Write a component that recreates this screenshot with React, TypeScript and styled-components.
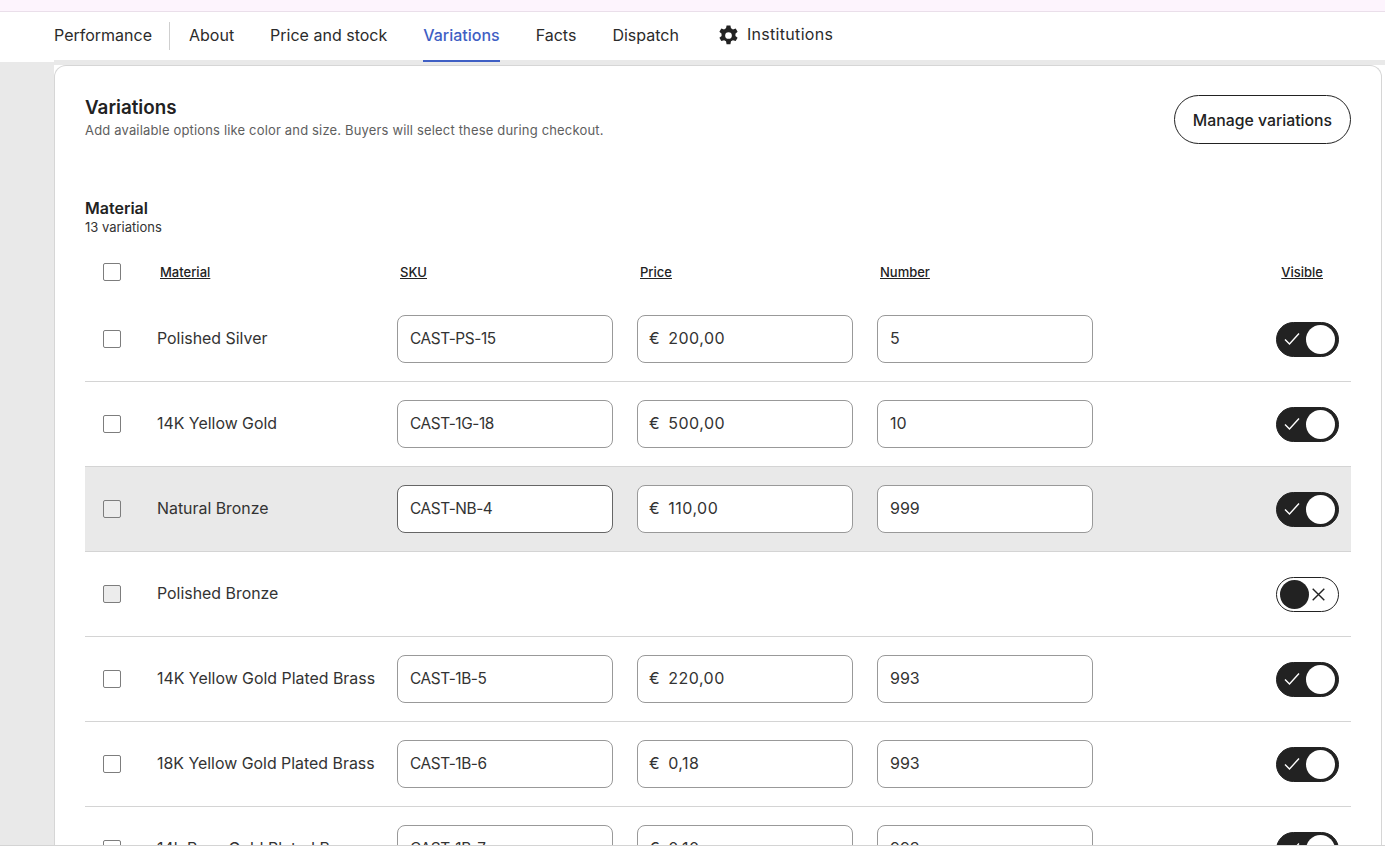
import React from "react";
import styled, { createGlobalStyle } from "styled-components";

const Global = createGlobalStyle`
  html, body { margin: 0; padding: 0; height: 100%; overflow: hidden; background: #fff; }
  * { box-sizing: border-box; }
  body { font-family: Inter, "Liberation Sans", sans-serif; color: #222; }
`;

const Viewport = styled.div`
  height: 846px;
  overflow: hidden;
  display: flex;
  flex-direction: column;
  border-bottom: 1px solid #d4d4d4;
  background: #fff;
`;
const TopStrip = styled.div`
  height: 12px;
  flex: none;
  background: #fdf4fd;
  border-bottom: 1px solid #eadfea;
`;
const Nav = styled.nav`
  height: 50px;
  flex: none;
  background: linear-gradient(#e9e9e9, #e9e9e9) 54px 48px / 100% 2px no-repeat, #fff;
  display: flex;
  padding-left: 54px;
`;
const Tab = styled.a<{ $active?: boolean; $flush?: boolean }>`
  display: flex;
  align-items: center;
  height: 50px;
  padding-bottom: 2px;
  font-size: 16px;
  color: ${(p) => (p.$active ? "#3f5fc4" : "#2b2b2b")};
  font-weight: ${(p) => (p.$active ? 500 : 400)};
  border-bottom: 2px solid ${(p) => (p.$active ? "#3f5fc4" : "transparent")};
  margin-right: ${(p) => (p.$flush ? 0 : 36)}px;
  white-space: nowrap;
`;
const SettingsTab = styled(Tab)`
  gap: 7px;
  padding-left: 2px;
  padding-bottom: 4px;
  letter-spacing: 0.02em;
  svg { margin-top: 3px; }
`;
const Divider = styled.span`
  width: 1px;
  height: 28px;
  margin: 10px 19px 0 17px;
  background: #cfcfcf;
`;
const Page = styled.main`
  flex: 1;
  min-height: 0;
  display: flex;
  border-top: 3px solid #e9e9e9;
`;
const Gutter = styled.div`
  width: 54px;
  flex: none;
  background: #e9e9e9;
`;
const Card = styled.section`
  flex: 1;
  margin-right: 3px;
  background: #fff;
  border: 1px solid #d6d6d6;
  border-bottom: none;
  border-radius: 12px 12px 0 0;
  padding: 29px 30px 0;
  height: 900px;
`;
const CardHead = styled.header`
  display: flex;
  justify-content: space-between;
  align-items: flex-start;
`;
const Intro = styled.div`
  padding-top: 1px;
`;
const Title = styled.h2`
  margin: 0;
  font-size: 18.8px;
  line-height: 24px;
  font-weight: 600;
`;
const Sub = styled.p`
  margin: 2px 0 0;
  font-size: 13px;
  letter-spacing: 0.165px;
  line-height: 16px;
  color: #5e5e5e;
`;
const Manage = styled.button`
  height: 49px;
  width: 177px;
  padding: 2px 0 0;
  border-radius: 25px;
  border: 1px solid #222;
  background: #fff;
  color: #222;
  font: 500 15.8px Inter, "Liberation Sans", sans-serif;
`;
const Section = styled.div`
  margin-top: 54px;
`;
const SectionTitle = styled.h3`
  margin: 0;
  font-size: 16px;
  line-height: 20px;
  font-weight: 600;
`;
const SectionSub = styled.p`
  margin: 1px 0 0;
  font-size: 13px;
  line-height: 17px;
  color: #333;
`;
const Columns = `
  display: grid;
  grid-template-columns: 72px 240px 240px 240px 240px 1fr;
  align-items: center;
`;
const HeadRow = styled.div`
  ${Columns}
  height: 61px;
  padding-top: 11px;
`;
const HeadLabel = styled.span`
  font-size: 13px;
  font-weight: 500;
  text-decoration: underline;
  padding-left: 3px;
`;
const VisibleLabel = styled(HeadLabel)`
  justify-self: end;
  margin-right: 28px;
`;
const Row = styled.div<{ $hover?: boolean }>`
  ${Columns}
  height: 85px;
  border-bottom: 1px solid #d4d4d4;
  background: ${(p) => (p.$hover ? "#e9e9e9" : "transparent")};
`;
const Check = styled.span<{ $filled?: boolean }>`
  display: block;
  width: 18px;
  height: 18px;
  margin-left: 18px;
  border: 1px solid #7d7d7d;
  border-radius: 2px;
  background: ${(p) => (p.$filled ? "#ececec" : "#fff")};
`;
const Name = styled.span`
  font-size: 15.9px;
  color: #333;
  white-space: nowrap;
  padding-bottom: 2px;
`;
const Field = styled.div<{ $strong?: boolean }>`
  width: 216px;
  height: 48px;
  display: flex;
  align-items: center;
  padding: 0 12px 2px;
  background: #fff;
  border: 1px solid ${(p) => (p.$strong ? "#666" : "#999")};
  border-radius: 8px;
  font-size: 16px;
  color: #333;
`;
const SkuField = styled(Field)`
  font-size: 15.4px;
  letter-spacing: -0.4px;
`;
const PriceField = styled(Field)`
  padding-left: 11px;
  gap: 8px;
  letter-spacing: 0.5px;
`;
const Spacer = styled.span``;
const Toggle = styled.span<{ $on: boolean }>`
  justify-self: end;
  margin-right: 12px;
  width: 63px;
  height: 35px;
  border-radius: 18px;
  display: flex;
  align-items: center;
  justify-content: space-between;
  flex-direction: ${(p) => (p.$on ? "row" : "row-reverse")};
  padding: ${(p) => (p.$on ? "0 3px 0 7px" : "0 13px 0 3px")};
  background: ${(p) => (p.$on ? "#222" : "#fff")};
  border: 1px solid #222;
`;
const Knob = styled.span<{ $on: boolean }>`
  width: 29px;
  height: 29px;
  border-radius: 50%;
  background: ${(p) => (p.$on ? "#fff" : "#222")};
`;

const Gear = () => (
  <svg width="23" height="23" viewBox="0 0 24 24" fill="#222" aria-hidden="true">
    <path fillRule="evenodd" d="M10 1.5h4l.6 3a8 8 0 0 1 2 1.15l2.9-1 2 3.45-2.3 2a8 8 0 0 1 0 2.3l2.3 2-2 3.45-2.9-1a8 8 0 0 1-2 1.15l-.6 3h-4l-.6-3a8 8 0 0 1-2-1.15l-2.9 1-2-3.45 2.3-2a8 8 0 0 1 0-2.3l-2.3-2 2-3.45 2.9 1a8 8 0 0 1 2-1.15zM12 8.5a3.5 3.5 0 1 0 0 7 3.5 3.5 0 0 0 0-7z" />
  </svg>
);
const CheckMark = () => (
  <svg width="16" height="14" viewBox="0 0 16 14" fill="none" stroke="#fff" strokeWidth="1.4" aria-hidden="true">
    <path d="M1 7.5l4.5 4.5L15 1.5" />
  </svg>
);
const Cross = () => (
  <svg width="13" height="13" viewBox="0 0 13 13" fill="none" stroke="#222" strokeWidth="1.4" aria-hidden="true">
    <path d="M.7.7l11.6 11.6M12.3.7L.7 12.3" />
  </svg>
);

type V = { name: string; sku?: string; price?: string; num?: string; on: boolean; hover?: boolean; filled?: boolean };
const rows: V[] = [
  { name: "Polished Silver", sku: "CAST-PS-15", price: "200,00", num: "5", on: true },
  { name: "14K Yellow Gold", sku: "CAST-1G-18", price: "500,00", num: "10", on: true },
  { name: "Natural Bronze", sku: "CAST-NB-4", price: "110,00", num: "999", on: true, hover: true, filled: true },
  { name: "Polished Bronze", on: false, filled: true },
  { name: "14K Yellow Gold Plated Brass", sku: "CAST-1B-5", price: "220,00", num: "993", on: true },
  { name: "18K Yellow Gold Plated Brass", sku: "CAST-1B-6", price: "0,18", num: "993", on: true },
  { name: "14k Rose Gold Plated Brass", sku: "CAST-1B-7", price: "0,10", num: "993", on: true },
];

export default function App() {
  return (
    <>
      <Global />
      <Viewport>
        <TopStrip />
        <Nav>
          <Tab $flush>Performance</Tab>
          <Divider />
          <Tab>About</Tab>
          <Tab>Price and stock</Tab>
          <Tab $active>Variations</Tab>
          <Tab>Facts</Tab>
          <Tab>Dispatch</Tab>
          <SettingsTab><Gear />Institutions</SettingsTab>
        </Nav>
        <Page>
          <Gutter />
          <Card>
            <CardHead>
              <Intro>
                <Title>Variations</Title>
                <Sub>Add available options like color and size. Buyers will select these during checkout.</Sub>
              </Intro>
              <Manage>Manage variations</Manage>
            </CardHead>
            <Section>
              <SectionTitle>Material</SectionTitle>
              <SectionSub>13 variations</SectionSub>
              <HeadRow>
                <Check />
                <HeadLabel>Material</HeadLabel>
                <HeadLabel>SKU</HeadLabel>
                <HeadLabel>Price</HeadLabel>
                <HeadLabel>Number</HeadLabel>
                <VisibleLabel>Visible</VisibleLabel>
              </HeadRow>
              {rows.map((r) => (
                <Row key={r.name} $hover={r.hover}>
                  <Check $filled={r.filled} />
                  <Name>{r.name}</Name>
                  {r.sku ? <SkuField $strong={r.hover}>{r.sku}</SkuField> : <Spacer />}
                  {r.price ? <PriceField><span>€</span>{r.price}</PriceField> : <Spacer />}
                  {r.num ? <Field>{r.num}</Field> : <Spacer />}
                  <Toggle $on={r.on}>
                    {r.on ? <CheckMark /> : <Cross />}
                    <Knob $on={r.on} />
                  </Toggle>
                </Row>
              ))}
            </Section>
          </Card>
        </Page>
      </Viewport>
    </>
  );
}
